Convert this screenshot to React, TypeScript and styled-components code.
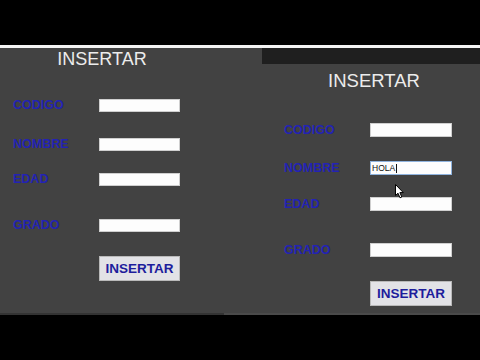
import React from "react";
import styled, { createGlobalStyle } from "styled-components";

const GlobalStyle = createGlobalStyle`
  html, body { margin: 0; padding: 0; background: #000; }
  #root { width: 480px; height: 360px; }
`;

const Page = styled.div`
  position: relative;
  width: 480px;
  height: 360px;
  display: flex;
  flex-direction: column;
  background: #000;
  overflow: hidden;
  font-family: "Liberation Sans", Arial, sans-serif;
`;

const TopBar = styled.div`
  height: 45px;
  background: #000;
`;

const Divider = styled.div`
  height: 3px;
  background: #f4f4f4;
`;

const Stage = styled.div`
  height: 265px;
  display: flex;
  background: #424242;
`;

const BottomEdge = styled.div`
  height: 2px;
  display: flex;
`;

const EdgePart = styled.div<{ $w?: number; $c: string }>`
  background: ${(p) => p.$c};
  ${(p) => (p.$w ? `width: ${p.$w}px;` : "flex: 1;")}
`;

const BottomBar = styled.div`
  flex: 1;
  background: #000;
`;

const LeftPane = styled.div`
  width: 262px;
  flex-shrink: 0;
  display: flex;
  flex-direction: column;
`;

const RightPane = styled.div`
  flex: 1;
  min-width: 0;
  display: flex;
  flex-direction: column;
`;

const TitleStrip = styled.div`
  height: 16px;
  background: #1f1f1f;
`;

const Title = styled.div<{ $w: number; $top: number; $size: number; $shift: number }>`
  box-sizing: border-box;
  width: ${(p) => p.$w}px;
  margin-top: ${(p) => p.$top}px;
  padding-left: ${(p) => p.$shift}px;
  height: 20px;
  line-height: 20px;
  text-align: center;
  color: #ececec;
  font-size: ${(p) => p.$size}px;
  font-family: "Liberation Sans", Arial, sans-serif;
`;

const Form = styled.div<{ $left: number }>`
  display: flex;
  flex-direction: column;
  padding-left: ${(p) => p.$left}px;
`;

const Row = styled.div<{ $top: number; $labelW: number; $h: number }>`
  display: grid;
  grid-template-columns: ${(p) => p.$labelW}px auto;
  align-items: center;
  height: ${(p) => p.$h}px;
  margin-top: ${(p) => p.$top}px;
`;

const Label = styled.span`
  color: #2323b4;
  font-weight: bold;
  font-size: 12.5px;
  line-height: 13px;
  padding-top: 1px;
  font-family: "Liberation Sans", Arial, sans-serif;
  white-space: nowrap;
`;

const Field = styled.div<{ $w: number; $h: number; $focused?: boolean }>`
  box-sizing: border-box;
  width: ${(p) => p.$w}px;
  height: ${(p) => p.$h}px;
  background: #fdfdfd;
  border: 1px solid ${(p) => (p.$focused ? "#8fb3de" : "#cfcfcf")};
  display: flex;
  align-items: center;
  padding-left: 1px;
`;

const FieldText = styled.span`
  font-family: "Liberation Sans", Arial, sans-serif;
  font-size: 8.5px;
  color: #111;
  line-height: 9px;
`;

const Caret = styled.span`
  width: 1px;
  height: 9px;
  background: #111;
  margin-left: 1px;
`;

const Button = styled.div<{ $top: number; $offset: number; $w: number }>`
  box-sizing: border-box;
  margin-top: ${(p) => p.$top}px;
  margin-left: ${(p) => p.$offset}px;
  width: ${(p) => p.$w}px;
  height: 25px;
  background: #e2e2e6;
  border: 1px solid #b9b9b9;
  display: flex;
  align-items: center;
  justify-content: center;
  color: #1d1d9c;
  font-weight: bold;
  font-size: 13.5px;
  font-family: "Liberation Sans", Arial, sans-serif;
`;

const Pointer = styled.svg`
  position: absolute;
  left: 395px;
  top: 184px;
`;

type FieldDef = { label: string; top: number; value?: string; focused?: boolean };

const leftFields: FieldDef[] = [
  { label: "CODIGO", top: 29 },
  { label: "NOMBRE", top: 26 },
  { label: "EDAD", top: 22 },
  { label: "GRADO", top: 33 },
];

const rightFields: FieldDef[] = [
  { label: "CODIGO", top: 32 },
  { label: "NOMBRE", top: 24 },
  { label: "EDAD", top: 22 },
  { label: "GRADO", top: 32 },
];

function FormBlock({
  fields,
  left,
  labelW,
  fieldW,
  fieldH,
  buttonTop,
}: {
  fields: FieldDef[];
  left: number;
  labelW: number;
  fieldW: number;
  fieldH: number;
  buttonTop: number;
}) {
  return (
    <Form $left={left}>
      {fields.map((f) => (
        <Row key={f.label} $top={f.top} $labelW={labelW} $h={fieldH}>
          <Label>{f.label}</Label>
          <Field $w={fieldW} $h={fieldH} $focused={f.focused}>
            {f.value && (
              <>
                <FieldText>{f.value}</FieldText>
                <Caret />
              </>
            )}
          </Field>
        </Row>
      ))}
      <Button $top={buttonTop} $offset={labelW} $w={fieldW}>
        INSERTAR
      </Button>
    </Form>
  );
}

export default function App() {
  const right = rightFields.map((f) =>
    f.label === "NOMBRE" ? { ...f, value: "HOLA", focused: true } : f
  );
  return (
    <>
      <GlobalStyle />
      <Page>
        <TopBar />
        <Divider />
        <Stage>
          <LeftPane>
            <Title $w={204} $top={1} $size={18} $shift={0}>
              INSERTAR
            </Title>
            <FormBlock
              fields={leftFields}
              left={13}
              labelW={86}
              fieldW={81}
              fieldH={13}
              buttonTop={25}
            />
          </LeftPane>
          <RightPane>
            <TitleStrip />
            <Title $w={218} $top={7} $size={18.5} $shift={6}>
              INSERTAR
            </Title>
            <FormBlock
              fields={right}
              left={22}
              labelW={86}
              fieldW={82}
              fieldH={14}
              buttonTop={24}
            />
          </RightPane>
        </Stage>
        <BottomEdge>
          <EdgePart $w={224} $c="#333333" />
          <EdgePart $c="#4a4a4a" />
        </BottomEdge>
        <BottomBar />
        <Pointer width="10" height="15" viewBox="0 0 10 15">
          <path
            d="M0.5 0.5 L0.5 11.5 L3 9.2 L5 13.8 L6.8 13 L4.9 8.6 L8.3 8.6 Z"
            fill="#fff"
            stroke="#000"
            strokeWidth="1"
            strokeLinejoin="round"
          />
        </Pointer>
      </Page>
    </>
  );
}
